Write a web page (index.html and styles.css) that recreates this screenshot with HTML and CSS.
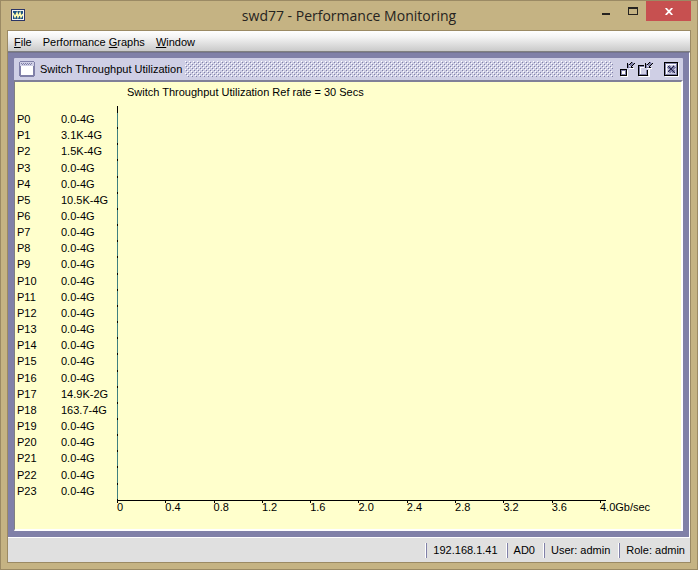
FILE: index.html
```
<!DOCTYPE html>
<html lang="en">
  <head>
    <meta charset="UTF-8" />
    <meta name="viewport" content="width=device-width, initial-scale=1.0" />
    <title>swd77 - Performance Monitoring</title>
    <link rel="stylesheet" href="styles.css">
  </head>
  <body>
    <div class="window">
      <header class="titlebar">
        <svg class="app-icon" width="14" height="12" viewBox="0 0 14 12" shape-rendering="crispEdges">
          <rect width="14" height="12" fill="#2b3566" />
          <rect x="1" y="1" width="12" height="10" fill="#f4f4f4" />
          <rect x="2" y="2" width="10" height="8" fill="#1f5684" />
          <path d="M2 4l2 4 2-4 1 4 2-4 1 4 2-3" fill="none" stroke="#fffbb0" stroke-width="1.5" shape-rendering="auto" />
        </svg>
        <h1>swd77 - Performance Monitoring</h1>
        <div class="window-buttons">
          <button type="button" class="minimize" aria-label="Minimize">
            <svg width="8" height="2"><rect width="8" height="2" fill="#262320" /></svg>
          </button>
          <button type="button" class="maximize" aria-label="Maximize">
            <svg width="10" height="8" shape-rendering="crispEdges"><path d="M0 0h10v8H0zM1 2v5h8V2z" fill="#262320" fill-rule="evenodd" /></svg>
          </button>
          <button type="button" class="close" aria-label="Close">
            <svg width="8" height="7" viewBox="0 0 8 7"><path d="M.7 0l6.6 7M7.3 0L.7 7" stroke="#fff" stroke-width="1.8" /></svg>
          </button>
        </div>
      </header>

      <div class="client">
        <nav class="menubar">
          <button type="button"><u>F</u>ile</button>
          <button type="button">Performance <u>G</u>raphs</button>
          <button type="button"><u>W</u>indow</button>
        </nav>

        <main class="desktop">
          <section class="frame">
            <div class="frame-title">
              <svg width="16" height="16" shape-rendering="crispEdges">
                <rect x="1" width="14" height="16" fill="#8080a8" />
                <rect y="1" width="16" height="14" fill="#8080a8" />
                <rect x="1" y="1" width="14" height="4" fill="#cfcfe5" />
                <path d="M2 2h1v1H2zM4 2h1v1H4zM6 2h1v1H6zM8 2h1v1H8zM10 2h1v1h-1zM12 2h1v1h-1zM3 3h1v1H3zM5 3h1v1H5zM7 3h1v1H7zM9 3h1v1H9zM11 3h1v1h-1z" fill="#8080a8" />
                <rect x="2" y="5" width="12" height="9" fill="#fff" />
              </svg>
              <h2>Switch Throughput Utilization</h2>
              <div class="grip"></div>
              <div class="frame-buttons">
                <button type="button" aria-label="Iconify">
                  <svg width="15" height="15" shape-rendering="crispEdges" fill="none">
                    <path d="M1 14.500h6.500V8" stroke="#fff" />
                    <path d="M.5 7.500h6v6h-6z" stroke="#000" />
                    <path d="M1.500 8.500h4v4h-4z" stroke="#8080a8" />
                    <rect x="2" y="9" width="3" height="3" fill="#fff" />
                    <path d="M9 6.500h5M14.500 1.500l-4 4" stroke="#fff" />
                    <path d="M10 4l3-3" stroke="#8080a8" stroke-width="3" />
                    <path d="M7.500 1v5M8.500 5.500h4M8.500 3.500l4-4M10.500 5.500l4-4" stroke="#000" />
                    <path d="M8.500 2v3h2" stroke="#8080a8" />
                  </svg>
                </button>
                <button type="button" aria-label="Maximize frame">
                  <svg width="15" height="15" shape-rendering="crispEdges" fill="none">
                    <path d="M1 14.500h10.500V7" stroke="#fff" />
                    <path d="M6 3.500H.5v10h9V8" stroke="#000" />
                    <path d="M6 4.500H1.500v8h7V8" stroke="#8080a8" />
                    <path d="M2.500 12V5.500H6M10.500 13V8" stroke="#fff" />
                    <path d="M9 6.500h5M14.500 1.500l-4 4" stroke="#fff" />
                    <path d="M10 4l3-3" stroke="#8080a8" stroke-width="3" />
                    <path d="M7.500 1v5M8.500 5.500h4M8.500 3.500l4-4M10.500 5.500l4-4" stroke="#000" />
                    <path d="M8.500 2v3h2" stroke="#8080a8" />
                  </svg>
                </button>
                <button type="button" class="frame-close" aria-label="Close frame">
                  <svg width="15" height="15" shape-rendering="crispEdges" fill="none">
                    <path d="M14.500 1v13.500H1" stroke="#fff" />
                    <path d="M.5.5h13v13H.5z" stroke="#000" />
                    <path d="M1.500 1.500h11v11h-11z" stroke="#8080a8" />
                    <path d="M2.500 12V2.500H12" stroke="#fff" />
                    <path d="M4.500 4.500l6 6M10.500 4.500l-6 6" stroke="#8080a8" stroke-width="3" />
                    <path d="M4 4l7 7M10 4l-6 6" stroke="#23234a" />
                  </svg>
                </button>
              </div>
            </div>

            <div class="chart">
              <h3>Switch Throughput Utilization Ref rate = 30 Secs</h3>
              <div class="plot">
                <table>
                  <tbody>
                    <tr><th scope="row">P0</th><td>0.0-4G</td><td class="bar"></td></tr>
                    <tr><th scope="row">P1</th><td>3.1K-4G</td><td class="bar"></td></tr>
                    <tr><th scope="row">P2</th><td>1.5K-4G</td><td class="bar"></td></tr>
                    <tr><th scope="row">P3</th><td>0.0-4G</td><td class="bar"></td></tr>
                    <tr><th scope="row">P4</th><td>0.0-4G</td><td class="bar"></td></tr>
                    <tr><th scope="row">P5</th><td>10.5K-4G</td><td class="bar"></td></tr>
                    <tr><th scope="row">P6</th><td>0.0-4G</td><td class="bar"></td></tr>
                    <tr><th scope="row">P7</th><td>0.0-4G</td><td class="bar"></td></tr>
                    <tr><th scope="row">P8</th><td>0.0-4G</td><td class="bar"></td></tr>
                    <tr><th scope="row">P9</th><td>0.0-4G</td><td class="bar"></td></tr>
                    <tr><th scope="row">P10</th><td>0.0-4G</td><td class="bar"></td></tr>
                    <tr><th scope="row">P11</th><td>0.0-4G</td><td class="bar"></td></tr>
                    <tr><th scope="row">P12</th><td>0.0-4G</td><td class="bar"></td></tr>
                    <tr><th scope="row">P13</th><td>0.0-4G</td><td class="bar"></td></tr>
                    <tr><th scope="row">P14</th><td>0.0-4G</td><td class="bar"></td></tr>
                    <tr><th scope="row">P15</th><td>0.0-4G</td><td class="bar"></td></tr>
                    <tr><th scope="row">P16</th><td>0.0-4G</td><td class="bar"></td></tr>
                    <tr><th scope="row">P17</th><td>14.9K-2G</td><td class="bar"></td></tr>
                    <tr><th scope="row">P18</th><td>163.7-4G</td><td class="bar"></td></tr>
                    <tr><th scope="row">P19</th><td>0.0-4G</td><td class="bar"></td></tr>
                    <tr><th scope="row">P20</th><td>0.0-4G</td><td class="bar"></td></tr>
                    <tr><th scope="row">P21</th><td>0.0-4G</td><td class="bar"></td></tr>
                    <tr><th scope="row">P22</th><td>0.0-4G</td><td class="bar"></td></tr>
                    <tr><th scope="row">P23</th><td>0.0-4G</td><td class="bar"></td></tr>
                  </tbody>
                </table>
              </div>
              <div class="axis">
                <span>0</span>
                <span>0.4</span>
                <span>0.8</span>
                <span>1.2</span>
                <span>1.6</span>
                <span>2.0</span>
                <span>2.4</span>
                <span>2.8</span>
                <span>3.2</span>
                <span>3.6</span>
                <span>4.0Gb/sec</span>
              </div>
            </div>
          </section>
        </main>

        <footer class="statusbar">
          <span>192.168.1.41</span>
          <span>AD0</span>
          <span>User: admin</span>
          <span>Role: admin</span>
        </footer>
      </div>
    </div>
  </body>
</html>
```

FILE: styles.css
```
* {
  box-sizing: border-box;
}

body {
  margin: 0;
  font-family: "Liberation Sans", Arial, sans-serif;
  font-size: 11px;
  color: #000;
}

h1,
h2,
h3 {
  margin: 0;
  font-weight: normal;
}

button {
  padding: 0;
  border: none;
  background: none;
  font: inherit;
  color: inherit;
}

svg {
  display: block;
}

.window {
  display: flex;
  flex-direction: column;
  min-height: 100vh;
  padding: 0 6px 6px;
  background: #c5b383;
  border: 1px solid #9b8a64;
}

.titlebar {
  display: grid;
  grid-template-columns: 1fr auto 1fr;
  align-items: start;
  height: 29px;
}

.app-icon {
  margin: 8px 0 0 4px;
}

.titlebar h1 {
  font-family: "Open Sans", "Segoe UI", sans-serif;
  font-size: 14px;
  line-height: 29px;
  color: #262320;
}

.window-buttons {
  display: flex;
  justify-content: flex-end;
}

.window-buttons button {
  display: flex;
  align-items: center;
  justify-content: center;
  width: 27px;
  height: 20px;
}

.window-buttons .minimize {
  padding-top: 5px;
}

.window-buttons .close {
  width: 45px;
  background: #c75050;
}

.client {
  flex: 1;
  display: flex;
  flex-direction: column;
  border: 1px solid #9b8a64;
}

.menubar {
  display: flex;
  gap: 11px;
  height: 21px;
  padding: 1px 6px 0;
  background: linear-gradient(#fff, #f4f4f4 30%, #cacaca);
  border-bottom: 1px solid #808080;
}

.desktop {
  flex: 1;
  display: flex;
  padding: 5px 6px 6px;
  background: #8080a8;
  border-top: 1px solid #73738f;
  border-right: 1px solid #fff;
  border-bottom: 1px solid #fff;
}

.frame {
  flex: 1;
  display: flex;
  flex-direction: column;
}

.frame-title {
  display: flex;
  align-items: center;
  height: 22px;
  padding: 0 4px 0 5px;
  background: #cfcfe5;
  border-radius: 1px 1px 0 0;
}

.frame-title h2 {
  margin: 0 3px 0 5px;
  font-size: 11px;
}

/* dotted drag area of the frame */
.grip {
  flex: 1;
  height: 16px;
  background:
    conic-gradient(at 1px 1px, transparent 75%, #fff 0) 0 0 / 4px 4px,
    conic-gradient(at 1px 1px, transparent 75%, #fff 0) 2px 2px / 4px 4px,
    conic-gradient(at 1px 1px, transparent 75%, #8080a8 0) 1px 1px / 4px 4px,
    conic-gradient(at 1px 1px, transparent 75%, #8080a8 0) 3px 3px / 4px 4px;
}

.frame-buttons {
  display: flex;
  gap: 3px;
  margin-left: 7px;
}

.frame-close {
  margin-left: 8px;
}

.chart {
  flex: 1;
  display: flex;
  flex-direction: column;
  padding: 3px 2px 15px 2px;
  background: #ffffcc;
  border: 1px solid #808080;
  border-top: 2px solid #808098;
  border-right: 2px solid #fff;
  border-bottom: 2px solid #fff;
}

.chart h3 {
  margin-bottom: 7px;
  padding-left: 110px;
  font-size: 11px;
  line-height: 14px;
}

.plot {
  flex: 1;
  display: flex;
  padding: 5px 0 1px;
  background: linear-gradient(#000, #000) 100px 0 / 1px 100% no-repeat;
}

table {
  width: 100%;
  border-collapse: collapse;
}

th,
td {
  padding: 0;
  font-weight: normal;
  text-align: left;
  line-height: 12px;
}

th {
  width: 44px;
}

td {
  width: 56px;
}

.bar {
  width: auto;
  background: linear-gradient(#000 2px, #408080 2px) 0 0 / 1px 100% no-repeat;
}

.axis {
  display: grid;
  grid-template-columns: repeat(10, 1fr) 6px;
  margin: 0 73px 0 100px;
  border-top: 1px solid #000;
}

.axis span {
  background: linear-gradient(#000, #000) 0 0 / 1px 2px no-repeat;
  line-height: 13px;
  white-space: nowrap;
}

.statusbar {
  display: flex;
  justify-content: flex-end;
  align-items: center;
  gap: 9px;
  height: 24px;
  padding: 1px 5px 0 0;
  background: #e0e0e0;
}

.statusbar span {
  padding-left: 6px;
  border-left: 1px solid #8080a8;
  box-shadow: -1px 0 #fff;
  line-height: 15px;
}
```
